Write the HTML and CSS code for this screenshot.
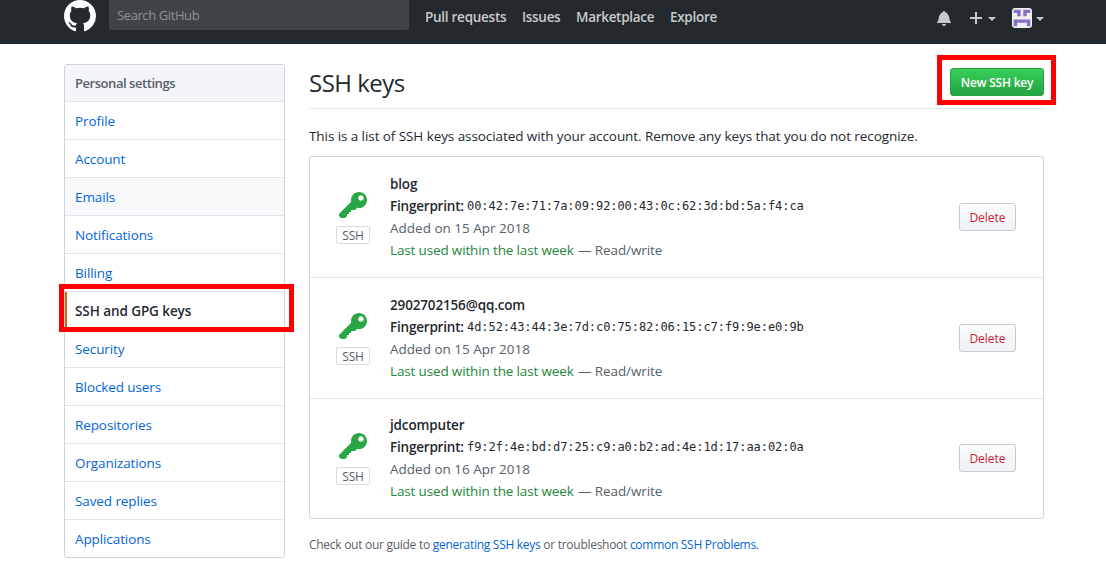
FILE: index.html
```html
<!DOCTYPE html>
<html lang="en">
<head>
<meta charset="utf-8">
<title>SSH and GPG keys</title>
<link rel="stylesheet" href="styles.css">
</head>
<body>
<svg width="0" height="0" class="sprite">
  <symbol id="key" viewBox="0 0 14 16"><path fill-rule="evenodd" d="M12.83 2.17C12.08 1.42 11.14 1.03 10 1c-1.13.03-2.08.42-2.83 1.17S6.04 3.86 6.01 5c0 .3.03.59.09.89L0 12v1l1 1h2l1-1v-1h1v-1h1v-1h2l1.09-1.11c.3.08.59.11.91.11 1.14-.03 2.08-.42 2.83-1.17S13.97 6.14 14 5c-.03-1.14-.42-2.08-1.17-2.83zM11 5.38c-.77 0-1.38-.61-1.38-1.38 0-.77.61-1.38 1.38-1.38.77 0 1.38.61 1.38 1.38 0 .77-.61 1.38-1.38 1.38z"/></symbol>
</svg>
<header class="header">
  <div class="header-inner">
    <svg class="logo" viewBox="0 0 16 16" width="32" height="32"><path fill-rule="evenodd" d="M8 0C3.58 0 0 3.58 0 8c0 3.54 2.29 6.53 5.47 7.59.4.07.55-.17.55-.38 0-.19-.01-.82-.01-1.49-2.01.37-2.53-.49-2.69-.94-.09-.23-.48-.94-.82-1.13-.28-.15-.68-.52-.01-.53.63-.01 1.08.58 1.23.82.72 1.21 1.87.87 2.33.66.07-.52.28-.87.51-1.07-1.78-.2-3.64-.89-3.64-3.95 0-.87.31-1.59.82-2.15-.08-.2-.36-1.02.08-2.12 0 0 .67-.21 2.2.82.64-.18 1.32-.27 2-.27.68 0 1.36.09 2 .27 1.53-1.04 2.2-.82 2.2-.82.44 1.1.16 1.92.08 2.12.51.56.82 1.27.82 2.15 0 3.07-1.87 3.75-3.65 3.95.29.25.54.73.54 1.48 0 1.07-.01 1.93-.01 2.2 0 .21.15.46.55.38A8.013 8.013 0 0 0 16 8c0-4.42-3.58-8-8-8z"/></svg>
    <div class="search"><span>Search GitHub</span></div>
    <nav class="topnav"><a class="n-pull">Pull requests</a><a class="n-issues">Issues</a><a class="n-market">Marketplace</a><a class="n-explore">Explore</a></nav>
    <div class="user-tools">
      <svg class="bell" viewBox="0 0 14 16" width="14" height="16"><path d="M14 12v1H0v-1l.73-.58c.77-.77.81-2.55 1.19-4.42C2.69 3.23 6 2 6 2c0-.55.45-1 1-1s1 .45 1 1c0 0 3.39 1.23 4.16 5 .38 1.88.42 3.66 1.19 4.42l.66.58H14zm-7 4c1.11 0 2-.89 2-2H5c0 1.11.89 2 2 2z"/></svg>
      <svg class="plus" viewBox="0 0 12 16" width="12" height="16"><path d="M12 9H7v5H5V9H0V7h5V2h2v5h5v2z"/></svg>
      <i class="caret"></i>
      <svg class="avatar" viewBox="0 0 20 20" width="20" height="20"><rect width="20" height="20" rx="3" fill="#f0f0f0"/><path fill="#8a6fc8" d="M1.7 1.8h7v6.4H5.3V5H1.7zM11.3 1.8h7V5h-3.6v3.2h-3.4zM1.7 11.4h16.6v6.8h-3.4v-3.4H5.1v3.4H1.7z"/></svg>
      <i class="caret"></i>
    </div>
  </div>
</header>
<div class="page">
  <aside class="menu">
    <h3 class="menu-heading"><span>Personal settings</span></h3>
    <a class="item">Profile</a>
    <a class="item">Account</a>
    <a class="item hover">Emails</a>
    <a class="item">Notifications</a>
    <a class="item">Billing</a>
    <a class="item selected">SSH and GPG keys</a>
    <a class="item">Security</a>
    <a class="item">Blocked users</a>
    <a class="item">Repositories</a>
    <a class="item">Organizations</a>
    <a class="item">Saved replies</a>
    <a class="item">Applications</a>
    <div class="mark mark-menu"></div>
  </aside>
  <main class="content">
    <div class="subhead">
      <h2><span>SSH keys</span></h2>
      <div class="new-wrap"><a class="btn btn-primary"><span>New SSH key</span></a><div class="mark mark-new"></div></div>
    </div>
    <p class="intro"><span>This is a list of SSH keys associated with your account. Remove any keys that you do not recognize.</span></p>
    <ul class="keys">
      <li class="key-row">
        <div class="key-type"><svg width="28" height="32"><use href="#key"/></svg><span class="label">SSH</span></div>
        <div class="info">
          <strong class="name">blog</strong>
          <div class="finger"><strong>Fingerprint:</strong><code>00:42:7e:71:7a:09:92:00:43:0c:62:3d:bd:5a:f4:ca</code></div>
          <div class="added">Added on 15 Apr 2018</div>
          <div class="used"><span class="recent">Last used within the last week</span><span class="access">— Read/write</span></div>
        </div>
        <a class="btn btn-danger">Delete</a>
      </li>
      <li class="key-row">
        <div class="key-type"><svg width="28" height="32"><use href="#key"/></svg><span class="label">SSH</span></div>
        <div class="info">
          <strong class="name mail">2902702156@qq.com</strong>
          <div class="finger"><strong>Fingerprint:</strong><code>4d:52:43:44:3e:7d:c0:75:82:06:15:c7:f9:9e:e0:9b</code></div>
          <div class="added">Added on 15 Apr 2018</div>
          <div class="used"><span class="recent">Last used within the last week</span><span class="access">— Read/write</span></div>
        </div>
        <a class="btn btn-danger">Delete</a>
      </li>
      <li class="key-row">
        <div class="key-type"><svg width="28" height="32"><use href="#key"/></svg><span class="label">SSH</span></div>
        <div class="info">
          <strong class="name">jdcomputer</strong>
          <div class="finger"><strong>Fingerprint:</strong><code>f9:2f:4e:bd:d7:25:c9:a0:b2:ad:4e:1d:17:aa:02:0a</code></div>
          <div class="added">Added on 16 Apr 2018</div>
          <div class="used"><span class="recent">Last used within the last week</span><span class="access">— Read/write</span></div>
        </div>
        <a class="btn btn-danger">Delete</a>
      </li>
    </ul>
    <p class="help">Check out our guide to <a>generating SSH keys</a> or troubleshoot <a>common SSH Problems</a>.</p>
  </main>
</div>
</body>
</html>
```
FILE: styles.css
```css
* { box-sizing: border-box; }
body { margin: 0; height: 567px; overflow: hidden; background: #fff; color: #24292e; font: 13.5px/22px "Open Sans", "Noto Sans", sans-serif; }
h2, h3, p, ul { margin: 0; padding: 0; font-weight: 400; }
.sprite { position: absolute; }
.header { height: 44px; background: #24292e; }
.header-inner { width: 980px; margin-left: 64px; display: flex; align-items: flex-start; }
.logo { fill: #fff; flex: none; }
.search { width: 300px; height: 30px; margin-left: 13px; padding-left: 8px; border-radius: 0 0 3px 3px; background: #404448; color: #8e9194; font-size: 13px; line-height: 30px; letter-spacing: -0.4px; }
.topnav { display: flex; margin-left: 16px; padding-top: 6px; gap: 16px; color: #c8c9cb; font-weight: 600; font-size: 13.5px; white-space: nowrap; }
.n-pull { width: 81px; letter-spacing: -0.27px; }
.n-issues { width: 38px; letter-spacing: -0.3px; }
.n-market { width: 78px; letter-spacing: -0.3px; }
.n-explore { width: 48px; letter-spacing: -0.3px; }
.user-tools { display: flex; align-items: center; height: 20px; margin: 8px 0 0 auto; fill: #c8c9cb; }
.plus { margin-left: 19px; }
.caret { border: 4px solid transparent; border-top-color: #c8c9cb; border-bottom: 0; margin: 2px 0 0 6px; }
.avatar { margin-left: 16px; }
.avatar + .caret { margin-left: 4px; }
.page { display: flex; gap: 24px; align-items: flex-start; width: 980px; margin: 20px 0 0 64px; }
.menu { position: relative; width: 221px; border: 1px solid #d1d5da; border-radius: 3px; }
.menu-heading { height: 37px; padding-left: 10px; border-bottom: 1px solid #e1e4e8; background: #f3f5f8; color: #586069; font-size: 13px; font-weight: 600; line-height: 36px; letter-spacing: -0.45px; }
.item { display: block; height: 38px; padding-left: 10px; border-bottom: 1px solid #e1e4e8; color: #0366d6; font-size: 13.5px; line-height: 38px; letter-spacing: -0.1px; }
.item:nth-last-child(2) { height: 37px; border-bottom: 0; }
.item.hover { background: #f6f8fa; }
.item.selected { padding-left: 8px; border-left: 2px solid #e36209; color: #24292e; font-weight: 600; letter-spacing: -0.08px; }
.mark { position: absolute; border: 5px solid #f00; }
.mark-menu { left: -6px; top: 219px; width: 235px; height: 48px; }
.content { width: 735px; }
.subhead { display: flex; justify-content: space-between; height: 45px; border-bottom: 1px solid #e1e4e8; }
h2 { font-size: 24px; line-height: 38px; letter-spacing: -0.5px; }
.new-wrap { position: relative; margin-top: 4px; }
.mark-new { left: -13px; top: -13px; width: 119px; height: 50px; }
.btn { display: flex; align-items: center; justify-content: center; height: 28px; padding-top: 2px; border-radius: 3px; font-size: 12px; font-weight: 600; white-space: nowrap; }
.btn-primary { width: 94px; border: 1px solid #279f43; background: linear-gradient(#34d058, #28a745 90%); color: #fff; letter-spacing: -0.2px; }
.btn-danger { width: 57px; margin: -1px 27px 0 auto; border: 1px solid #c8cbce; background: linear-gradient(#fafbfc, #eff3f6 90%); color: #cb2431; font-weight: 500; }
.intro { margin-top: 16px; white-space: nowrap; letter-spacing: -0.08px; }
.keys { margin-top: 9px; border: 1px solid #d1d5da; border-radius: 3px; list-style: none; }
.key-row { display: flex; align-items: center; height: 121px; border-bottom: 1px solid #e1e4e8; }
.key-row:last-child { height: 119px; padding-bottom: 1px; border: 0; }
.key-type { display: flex; flex-direction: column; align-items: center; width: 34px; margin: 0 20px 0 26px; fill: #28a745; }
.label { width: 34px; height: 18px; margin-top: 4px; border: 1px solid #d9dcdf; border-radius: 2px; color: #586069; font-size: 12px; line-height: 17px; text-align: center; letter-spacing: -0.2px; }
.info { white-space: nowrap; }
.name { display: block; font-weight: 600; letter-spacing: -0.15px; }
.finger { display: flex; height: 22px; }
.finger strong { width: 77px; font-weight: 600; letter-spacing: -0.2px; }
code { font: 12px/23px "DejaVu Sans Mono", monospace; letter-spacing: -0.06px; }
.added, .used { color: #586069; }
.used { display: flex; }
.recent { width: 188px; color: #22863a; letter-spacing: -0.15px; }
.access { letter-spacing: -0.1px; }
.help { margin-top: 15px; color: #586069; font-size: 12px; letter-spacing: -0.28px; white-space: nowrap; }
.help a { color: #0366d6; }
```
